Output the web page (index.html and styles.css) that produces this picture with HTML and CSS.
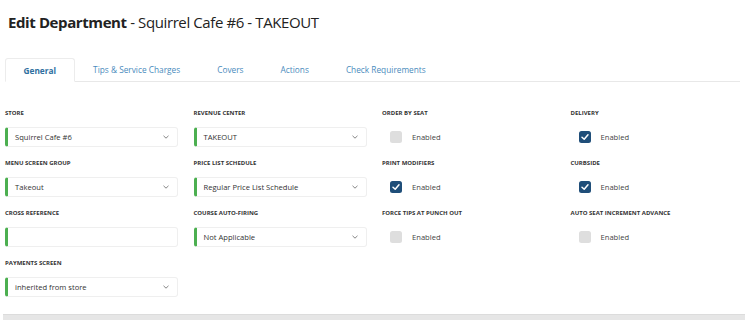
FILE: index.html
```html
<!DOCTYPE html>
<html>
<head>
<meta charset="utf-8">
<link rel="stylesheet" href="styles.css">
</head>
<body>
<div class="page">
  <h1 class="title"><b>Edit Department</b> - Squirrel Cafe #6 - TAKEOUT</h1>
  <ul class="tabs">
    <li class="tab active">General</li>
    <li class="tab">Tips &amp; Service Charges</li>
    <li class="tab">Covers</li>
    <li class="tab">Actions</li>
    <li class="tab">Check Requirements</li>
  </ul>
  <div class="grid">
    <div class="field">
      <div class="label">STORE</div>
      <div class="select"><span>Squirrel Cafe #6</span><svg class="chev" viewBox="0 0 6 4"><path d="M0.5 0.8 L3 3.2 L5.5 0.8"/></svg></div>
    </div>
    <div class="field">
      <div class="label">REVENUE CENTER</div>
      <div class="select"><span>TAKEOUT</span><svg class="chev" viewBox="0 0 6 4"><path d="M0.5 0.8 L3 3.2 L5.5 0.8"/></svg></div>
    </div>
    <div class="field">
      <div class="label">ORDER BY SEAT</div>
      <div class="check"><span class="box"></span><span>Enabled</span></div>
    </div>
    <div class="field">
      <div class="label">DELIVERY</div>
      <div class="check"><span class="box on"><svg viewBox="0 0 12 12"><path d="M3 6.2 L5.2 8.2 L9 3.8"/></svg></span><span>Enabled</span></div>
    </div>

    <div class="field">
      <div class="label">MENU SCREEN GROUP</div>
      <div class="select"><span>Takeout</span><svg class="chev" viewBox="0 0 6 4"><path d="M0.5 0.8 L3 3.2 L5.5 0.8"/></svg></div>
    </div>
    <div class="field">
      <div class="label">PRICE LIST SCHEDULE</div>
      <div class="select"><span>Regular Price List Schedule</span><svg class="chev" viewBox="0 0 6 4"><path d="M0.5 0.8 L3 3.2 L5.5 0.8"/></svg></div>
    </div>
    <div class="field">
      <div class="label">PRINT MODIFIERS</div>
      <div class="check"><span class="box on"><svg viewBox="0 0 12 12"><path d="M3 6.2 L5.2 8.2 L9 3.8"/></svg></span><span>Enabled</span></div>
    </div>
    <div class="field">
      <div class="label">CURBSIDE</div>
      <div class="check"><span class="box on"><svg viewBox="0 0 12 12"><path d="M3 6.2 L5.2 8.2 L9 3.8"/></svg></span><span>Enabled</span></div>
    </div>

    <div class="field">
      <div class="label">CROSS REFERENCE</div>
      <div class="select"></div>
    </div>
    <div class="field">
      <div class="label">COURSE AUTO-FIRING</div>
      <div class="select"><span>Not Applicable</span><svg class="chev" viewBox="0 0 6 4"><path d="M0.5 0.8 L3 3.2 L5.5 0.8"/></svg></div>
    </div>
    <div class="field">
      <div class="label">FORCE TIPS AT PUNCH OUT</div>
      <div class="check"><span class="box"></span><span>Enabled</span></div>
    </div>
    <div class="field">
      <div class="label">AUTO SEAT INCREMENT ADVANCE</div>
      <div class="check"><span class="box"></span><span>Enabled</span></div>
    </div>

    <div class="field">
      <div class="label">PAYMENTS SCREEN</div>
      <div class="select"><span>inherited from store</span><svg class="chev" viewBox="0 0 6 4"><path d="M0.5 0.8 L3 3.2 L5.5 0.8"/></svg></div>
    </div>
  </div>
  <div class="footer"></div>
</div>
</body>
</html>
```

FILE: styles.css
```css
* { box-sizing: border-box; }
html, body { margin: 0; padding: 0; background: #fff; }
body { font-family: "Open Sans", "Noto Sans", sans-serif; color: #333; width: 750px; height: 320px; overflow: hidden; }
.page { padding: 0 5px; }
.title {
  margin: 0;
  padding: 11px 0 0 3px;
  height: 58px;
  font-size: 15px;
  font-weight: 400;
  line-height: 22px;
  color: #222;
  letter-spacing: -0.4px;
}
.title b { font-weight: 700; }
.tabs {
  list-style: none;
  margin: 0 5px 0 0;
  padding: 0;
  display: flex;
  height: 24px;
  border-bottom: 1px solid #e8e8e8;
}
.tab {
  padding: 0 18.5px;
  font-size: 8.3px;
  line-height: 23px;
  color: #4a8bbd;
}
.tab.active {
  font-weight: 700;
  color: #2f6f9f;
  background: #fff;
  border: 1px solid #ececec;
  border-bottom: 1px solid #fff;
  border-radius: 3px 3px 0 0;
  margin-bottom: -1px;
  padding: 0 17.5px;
}
.grid {
  margin-top: 26px;
  display: grid;
  grid-template-columns: repeat(4, 173px);
  column-gap: 15.5px;
  row-gap: 10px;
}
.field { height: 40px; }
.label {
  font-size: 6px;
  font-weight: 700;
  line-height: 10px;
  color: #333;
}
.select {
  margin-top: 9px;
  height: 20px;
  border: 1px solid #efefef;
  border-left: 3px solid #4caf50;
  border-radius: 3px;
  display: flex;
  align-items: center;
  justify-content: space-between;
  padding: 0 8px 0 7px;
  font-size: 7.6px;
  color: #333;
}
.chev { width: 6px; height: 4px; fill: none; stroke: #777; stroke-width: 0.9; }
.check {
  margin-top: 9px;
  height: 20px;
  display: flex;
  align-items: center;
  padding-left: 8px;
  font-size: 7.6px;
  color: #444;
}
.box {
  width: 12px;
  height: 12px;
  border-radius: 2.5px;
  background: #dedede;
  margin-right: 10px;
  display: flex;
}
.box.on { background: #1f4e79; }
.box svg { width: 12px; height: 12px; fill: none; stroke: #fff; stroke-width: 1.5; stroke-linecap: round; stroke-linejoin: round; }
.footer {
  margin: 16px 0 0 -2px;
  width: 742px;
  height: 10px;
  background: #e6e6e6;
  border-top: 1px solid #dcdcdc;
}
```
